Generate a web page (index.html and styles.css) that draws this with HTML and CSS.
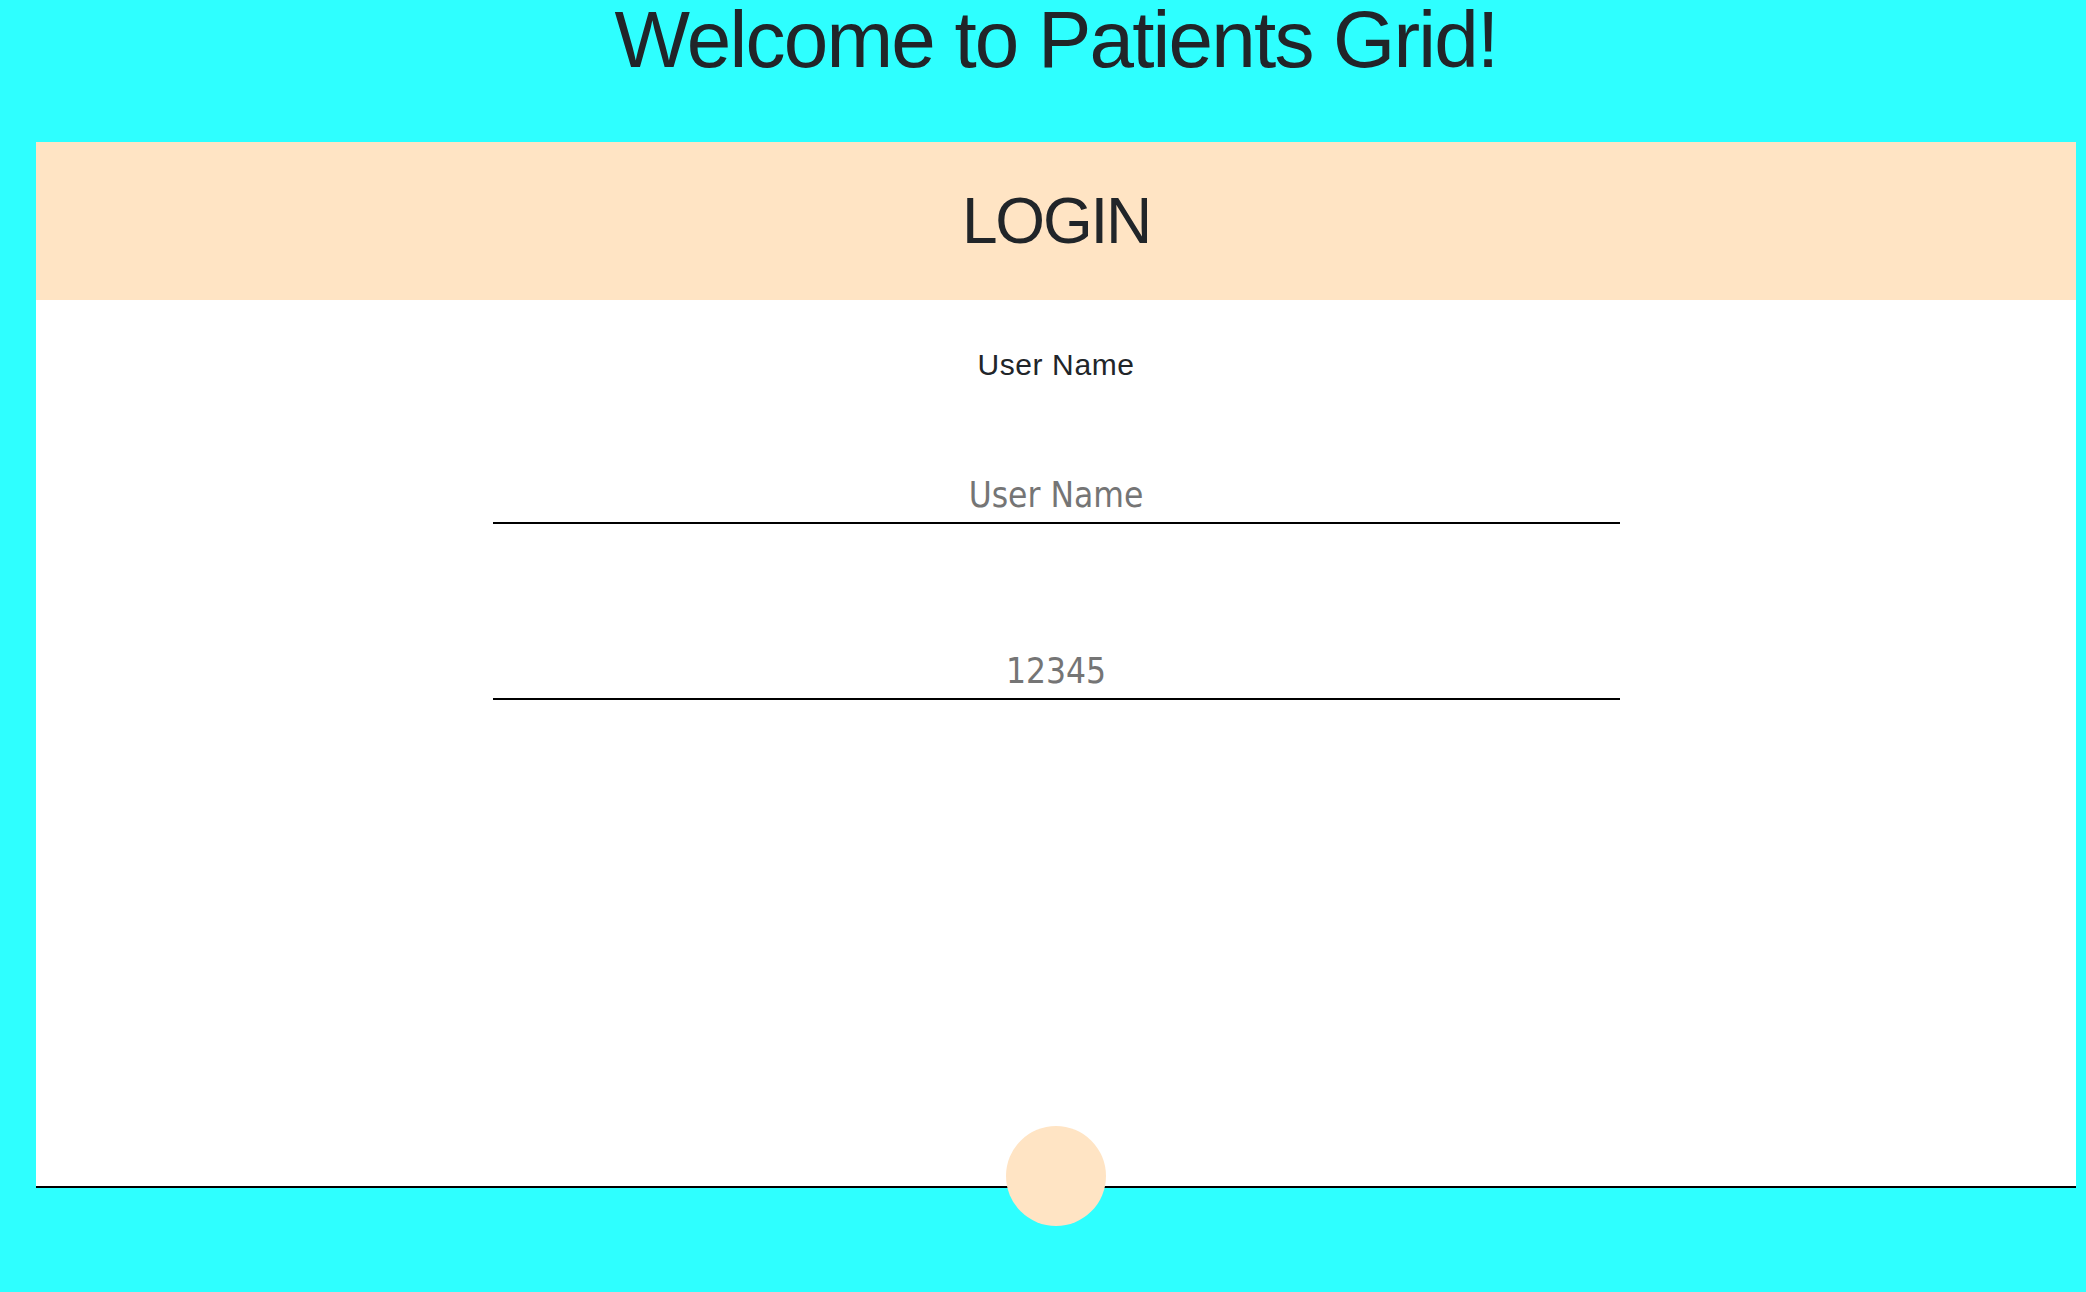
FILE: index.html
```html
<!DOCTYPE html>
<html lang="en">
<head>
<meta charset="utf-8">
<title>Patients Grid</title>
<link rel="stylesheet" href="styles.css">
</head>
<body>
  <div class="page">
    <h1 class="welcome">Welcome to Patients Grid!</h1>
    <div class="card">
      <div class="card-header">LOGIN</div>
      <form class="login-form">
        <label class="field-label" for="username">User Name</label>
        <input class="field-input first" id="username" type="text" placeholder="User Name">
        <input class="field-input second" id="password" type="password" placeholder="12345">
      </form>
      <div class="submit-dot"></div>
    </div>
  </div>
</body>
</html>
```

FILE: styles.css
```css
html, body {
  margin: 0;
  padding: 0;
}

body {
  background: #2effff;
  font-family: "Liberation Sans", Arial, sans-serif;
  color: #212529;
  min-height: 1292px;
}

.page {
  margin-left: 36px;
  width: 2040px;
}

.welcome {
  margin: 0 0 62px 0;
  font-size: 80px;
  line-height: 80px;
  font-weight: 400;
  letter-spacing: -1.8px;
  text-align: center;
  color: #212529;
}

.card {
  position: relative;
  height: 1044px;
  background: #ffffff;
  border-bottom: 2px solid #000000;
  display: flex;
  flex-direction: column;
}

.card-header {
  height: 158px;
  background: #ffe4c4;
  display: flex;
  align-items: center;
  justify-content: center;
  font-size: 64px;
  letter-spacing: -2.2px;
  color: #212529;
}

.login-form {
  display: flex;
  flex-direction: column;
  align-items: center;
  padding-top: 47px;
}

.field-label {
  font-size: 30px;
  line-height: 36px;
  letter-spacing: 0.6px;
  color: #212529;
}

.field-input {
  box-sizing: content-box;
  width: 1127px;
  height: 54px;
  padding: 0;
  border: none;
  border-bottom: 2px solid #000000;
  background: transparent;
  outline: none;
  text-align: center;
  font-family: "DejaVu Sans Condensed", "DejaVu Sans", sans-serif;
  font-stretch: condensed;
  font-size: 35px;
  color: #212529;
}

.field-input::placeholder {
  color: #757575;
  opacity: 1;
}

.field-input.first {
  margin-top: 85px;
}

.field-input.second {
  margin-top: 120px;
}

.submit-dot {
  position: absolute;
  left: 50%;
  bottom: -40px;
  width: 100px;
  height: 100px;
  margin-left: -50px;
  border-radius: 50%;
  background: #ffe4c4;
}
```
